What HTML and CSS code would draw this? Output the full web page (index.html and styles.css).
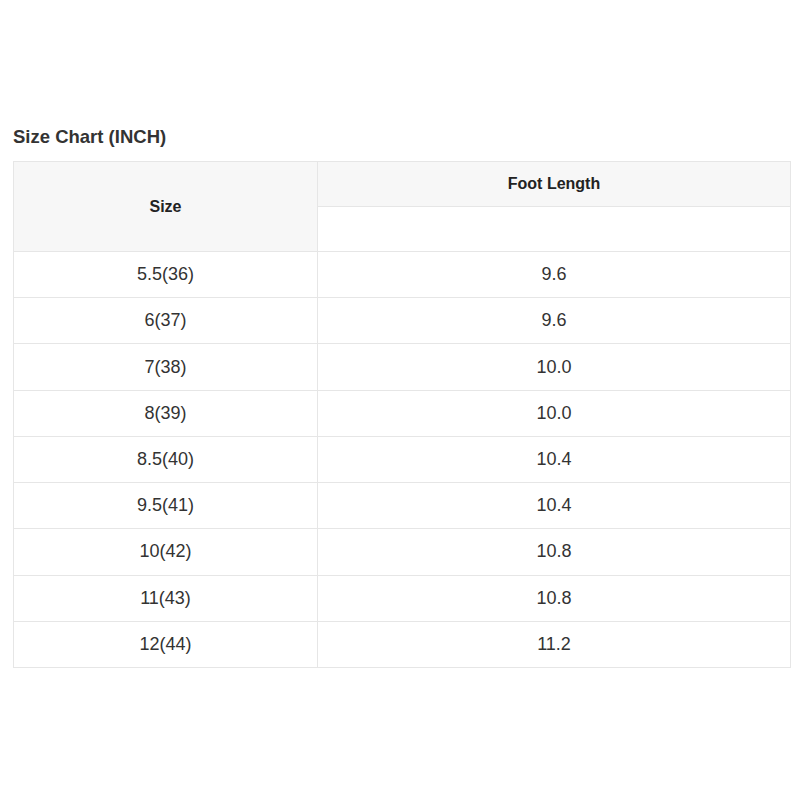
FILE: index.html
```html
<!DOCTYPE html>
<html>
<head>
<meta charset="utf-8">
<link rel="stylesheet" href="styles.css">
</head>
<body>
<div class="wrap">
  <h2 class="title">Size Chart (INCH)</h2>
  <table class="chart">
    <thead>
      <tr>
        <th class="c1" rowspan="2">Size</th>
        <th class="c2">Foot Length</th>
      </tr>
      <tr><th class="c2 empty"></th></tr>
    </thead>
    <tbody>
      <tr><td>5.5(36)</td><td>9.6</td></tr>
      <tr><td>6(37)</td><td>9.6</td></tr>
      <tr><td>7(38)</td><td>10.0</td></tr>
      <tr><td>8(39)</td><td>10.0</td></tr>
      <tr><td>8.5(40)</td><td>10.4</td></tr>
      <tr><td>9.5(41)</td><td>10.4</td></tr>
      <tr><td>10(42)</td><td>10.8</td></tr>
      <tr><td>11(43)</td><td>10.8</td></tr>
      <tr><td>12(44)</td><td>11.2</td></tr>
    </tbody>
  </table>
</div>
</body>
</html>
```
FILE: styles.css
```css
html, body {
  margin: 0;
  padding: 0;
  background: #fff;
  font-family: "Liberation Sans", Arial, sans-serif;
}
.wrap {
  padding: 126px 9px 0 13px;
}
.title {
  margin: 0 0 13px 0;
  font-size: 18.5px;
  line-height: 22px;
  font-weight: bold;
  color: #333;
}
.chart {
  width: 778px;
  border-collapse: collapse;
  table-layout: fixed;
}
.chart th, .chart td {
  border: 1px solid #e6e6e6;
  text-align: center;
  padding: 0;
}
.chart th {
  background: #f7f7f7;
  font-size: 16px;
  font-weight: bold;
  color: #222;
  height: 44px;
}
.chart th.empty {
  background: #fff;
}
.chart .c1 {
  width: 303px;
}
.chart td {
  height: 45.22px;
  font-size: 18px;
  color: #333;
}
```
